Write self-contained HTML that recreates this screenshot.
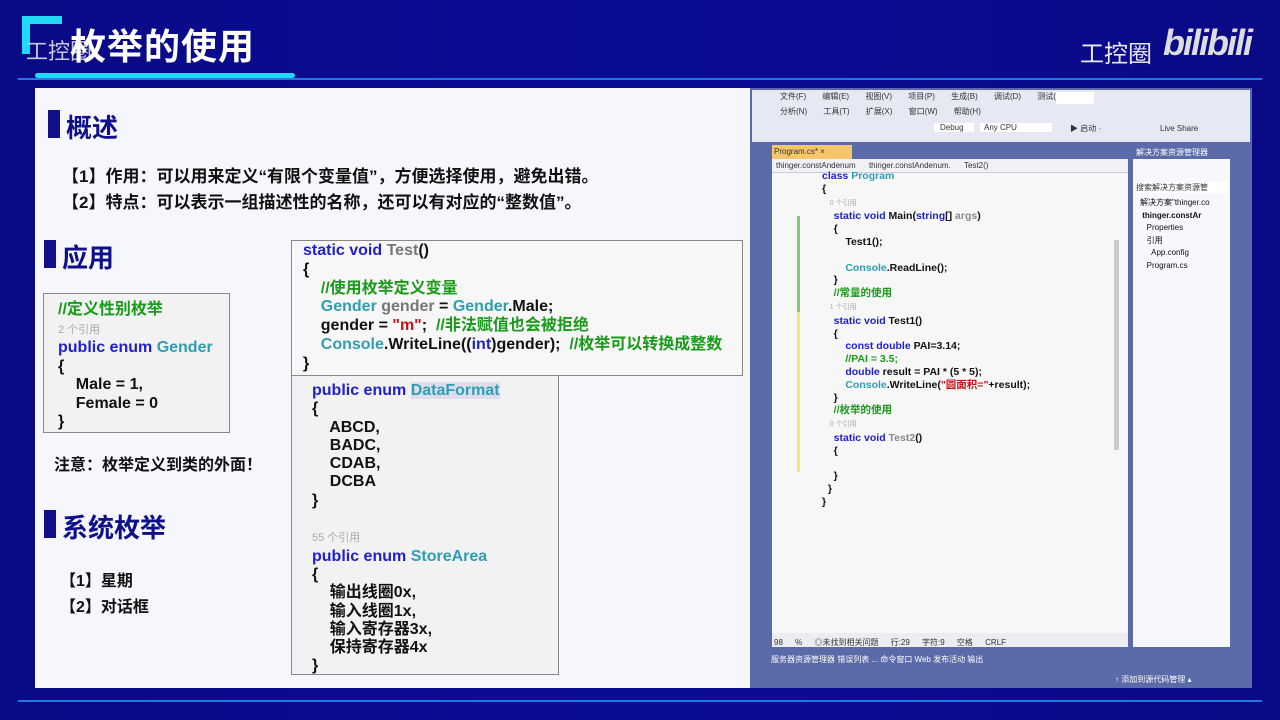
<!DOCTYPE html>
<html><head><meta charset="utf-8"><style>
*{margin:0;padding:0;box-sizing:border-box}
body{width:1280px;height:720px;overflow:hidden;background:linear-gradient(90deg,#0a0a86 0%,#0b0c95 50%,#0a0a86 100%);font-family:"Liberation Sans","Noto Sans CJK SC",sans-serif;position:relative}
.a{position:absolute}
.panel{left:35px;top:88px;width:1215px;height:600px;background:#f6f7fc}
.bar{background:#10108a;width:12px}
.h{font-weight:bold;color:#10108a;font-size:26px}
.t{font-size:17px;color:#111;font-weight:bold}
.code{font-family:"Liberation Sans","Noto Sans CJK SC",sans-serif;font-weight:bold;font-size:16px;line-height:18.5px;color:#111;white-space:pre}
.kw{color:#2020d0}.ty{color:#2e9eb0}.cm{color:#1a9a1a}.gr{color:#aaa;font-weight:normal;font-size:11px}.st{color:#c0151a}
.vs{left:750px;top:88px;width:502px;height:600px;background:#5b6aa8}
.small{font-size:8px;color:#333}
.vc{font-family:"Liberation Sans","Noto Sans CJK SC",sans-serif;font-weight:bold;font-size:10.5px;line-height:12.8px;white-space:pre;color:#111}
</style></head><body>
<div class="a" style="left:22px;top:16px;width:40px;height:38px;border-left:8px solid #23d8f5;border-top:8px solid #23d8f5"></div>
<div class="a" style="left:26px;top:34px;font-size:22px;color:#c8c8e0">工控圈</div>
<div class="a" style="left:70px;top:18px;font-size:36px;font-weight:bold;color:#fff;letter-spacing:1px">枚举的使用</div>
<div class="a" style="left:1080px;top:34px;font-size:24px;color:#e8e8f5">工控圈</div>
<div class="a" style="left:1163px;top:22px;font-size:36px;font-weight:bold;color:#ddd;font-style:italic;letter-spacing:-2px">bilibili</div>
<div class="a" style="left:35px;top:73px;width:260px;height:5px;background:#23d8f5;border-radius:3px"></div>
<div class="a" style="left:18px;top:78px;width:1244px;height:2px;background:#1e7ae0"></div>
<div class="a" style="left:18px;top:700px;width:1244px;height:2px;background:#1e7ae0"></div>
<div class="a panel"></div>
<div class="a bar" style="left:48px;top:110px;height:28px"></div>
<div class="a h" style="left:66px;top:108px">概述</div>
<div class="a t" style="left:62px;top:162px">【1】作用：可以用来定义“有限个变量值”，方便选择使用，避免出错。</div>
<div class="a t" style="left:62px;top:188px">【2】特点：可以表示一组描述性的名称，还可以有对应的“整数值”。</div>
<div class="a bar" style="left:44px;top:240px;height:28px"></div>
<div class="a h" style="left:62px;top:238px">应用</div>
<div class="a" style="left:43px;top:293px;width:187px;height:140px;border:1px solid #888;background:#f2f2f2"></div>
<div class="a code" style="left:58px;top:301px"><span class="cm">//定义性别枚举</span>
<span class="gr">2 个引用</span>
<span class="kw">public enum</span> <span class="ty">Gender</span>
{
    Male = 1,
    Female = 0
}</div>
<div class="a t" style="left:54px;top:451px;font-size:16px">注意：枚举定义到类的外面！</div>
<div class="a bar" style="left:44px;top:510px;height:28px"></div>
<div class="a h" style="left:62px;top:508px">系统枚举</div>
<div class="a t" style="left:60px;top:567px;font-size:16px">【1】星期</div>
<div class="a t" style="left:60px;top:593px;font-size:16px">【2】对话框</div>
<div class="a" style="left:291px;top:372px;width:268px;height:303px;border:1px solid #888;background:#f2f2f2"></div>
<div class="a code" style="left:312px;top:382px;line-height:18.3px"><span class="kw">public enum</span> <span class="ty" style="background:#dde">DataFormat</span>
{
    ABCD,
    BADC,
    CDAB,
    DCBA
}

<span class="gr">55 个引用</span>
<span class="kw">public enum</span> <span class="ty">StoreArea</span>
{
    输出线圈0x,
    输入线圈1x,
    输入寄存器3x,
    保持寄存器4x
}</div>
<div class="a" style="left:291px;top:240px;width:452px;height:136px;border:1px solid #888;background:#f7f7f7"></div>
<div class="a code" style="left:303px;top:242px;line-height:18.8px"><span class="kw">static void</span> <span style="color:#777">Test</span>()
{
    <span class="cm">//使用枚举定义变量</span>
    <span class="ty">Gender</span> <span style="color:#777">gender</span> = <span class="ty">Gender</span>.Male;
    gender = <span class="st">"m"</span>;  <span class="cm">//非法赋值也会被拒绝</span>
    <span class="ty">Console</span>.WriteLine((<span class="kw">int</span>)gender);  <span class="cm">//枚举可以转换成整数</span>
}</div>
<div class="a vs"></div>
<div class="a" style="left:752px;top:90px;width:498px;height:52px;background:#e6e8f3"></div>
<div class="a small" style="left:780px;top:91px;word-spacing:14px">文件(F) 编辑(E) 视图(V) 项目(P) 生成(B) 调试(D) 测试(S)</div>
<div class="a small" style="left:780px;top:106px;word-spacing:14px">分析(N) 工具(T) 扩展(X) 窗口(W) 帮助(H)</div>
<div class="a" style="left:1056px;top:92px;width:38px;height:12px;background:#fff"></div>
<div class="a small" style="left:934px;top:123px;background:#fff;padding:0 6px;width:40px">Debug</div>
<div class="a small" style="left:980px;top:123px;background:#fff;padding:0 4px;width:72px">Any CPU</div>
<div class="a small" style="left:1070px;top:123px">▶ 启动 ·</div>
<div class="a small" style="left:1160px;top:124px">Live Share</div>
<div class="a" style="left:772px;top:145px;width:80px;height:14px;background:#f5c76a"></div>
<div class="a small" style="left:774px;top:147px">Program.cs*  ×</div>
<div class="a small" style="left:1136px;top:147px;color:#fff">解决方案资源管理器</div>
<div class="a" style="left:772px;top:159px;width:356px;height:14px;background:#f0f0f5;border-bottom:1px solid #ccd"></div>
<div class="a small" style="left:776px;top:161px">thinger.constAndenum &nbsp;&nbsp;&nbsp;&nbsp; thinger.constAndenum. &nbsp;&nbsp;&nbsp;&nbsp; Test2()</div>
<div class="a" style="left:772px;top:173px;width:356px;height:460px;background:#f7f7f7"></div>
<div class="a" style="left:797px;top:216px;width:3px;height:96px;background:#7ccf6e"></div>
<div class="a" style="left:797px;top:312px;width:3px;height:160px;background:#f2ea70"></div>
<div class="a" style="left:1114px;top:240px;width:5px;height:210px;background:#ccc"></div>
<div class="a vc" style="left:822px;top:170px"><span class="kw">class</span> <span class="ty">Program</span>
{
<span class="gr" style="font-size:7px">    0 个引用</span>
    <span class="kw">static void</span> Main(<span class="kw">string</span>[] <span style="color:#888">args</span>)
    {
        Test1();

        <span class="ty">Console</span>.ReadLine();
    }
    <span class="cm">//常量的使用</span>
<span class="gr" style="font-size:7px">    1 个引用</span>
    <span class="kw">static void</span> Test1()
    {
        <span class="kw">const double</span> PAI=3.14;
        <span class="cm">//PAI = 3.5;</span>
        <span class="kw">double</span> result = PAI * (5 * 5);
        <span class="ty">Console</span>.WriteLine(<span class="st">"圆面积="</span>+result);
    }
    <span class="cm">//枚举的使用</span>
<span class="gr" style="font-size:7px">    0 个引用</span>
    <span class="kw">static void</span> <span style="color:#888">Test2</span>()
    {

    }
  }
}</div>
<div class="a" style="left:772px;top:633px;width:356px;height:14px;background:#ececf2"></div>
<div class="a small" style="left:774px;top:637px;word-spacing:10px">98 %   ◎未找到相关问题     行:29 字符:9 空格 CRLF</div>
<div class="a" style="left:1133px;top:159px;width:97px;height:488px;background:#f7f8fc"></div>
<div class="a small" style="left:1136px;top:182px;background:#fff;width:92px">搜索解决方案资源管</div>
<div class="a vc" style="left:1140px;top:197px;font-size:8px;font-weight:normal;line-height:12.5px">解决方案"thinger.co
<b> thinger.constAr</b>
   Properties
   引用
     App.config
   Program.cs</div>
<div class="a small" style="left:771px;top:654px;color:#fff">服务器资源管理器  错误列表 ...  命令窗口  Web 发布活动  输出</div>
<div class="a small" style="left:1115px;top:674px;color:#fff">↑ 添加到源代码管理 ▴</div>
</body></html>
